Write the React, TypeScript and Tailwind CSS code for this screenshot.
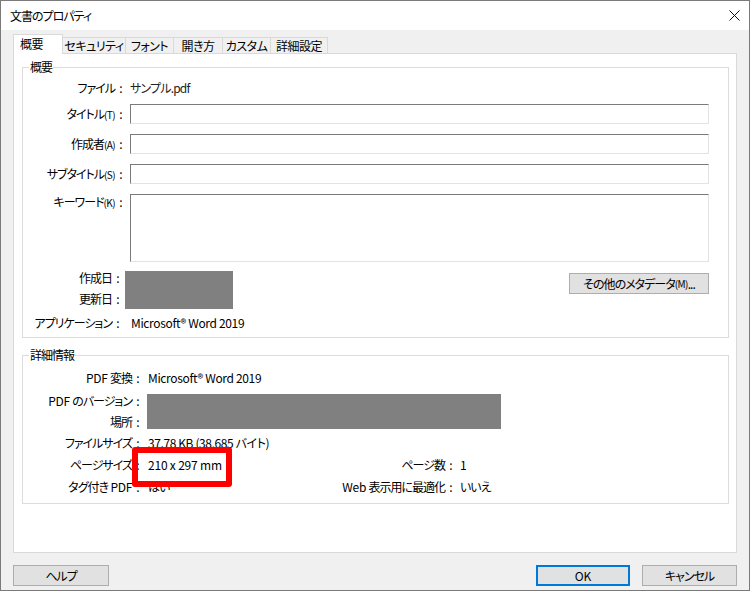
import React from 'react';

const tabs = [
  { label: '概要', w: 'w-[50px]', active: true },
  { label: 'セキュリティ', w: 'w-[63px]' },
  { label: 'フォント', w: 'w-[48px]' },
  { label: '開き方', w: 'w-[49px]' },
  { label: 'カスタム', w: 'w-[48px]' },
  { label: '詳細設定', w: 'w-[57px]' },
];

function Label({ children, className = '' }: { children: React.ReactNode; className?: string }) {
  return (
    <div className={`flex justify-end items-center shrink-0 whitespace-nowrap ${className}`}>
      <span>{children}</span>
      <span className="w-[12px] text-center tracking-normal">:</span>
    </div>
  );
}

function Field({ className = '' }: { className?: string }) {
  return (
    <div
      className={`flex-1 bg-white border border-[#e3e3e3] border-t-[#7a7a7a] border-l-[#7a7a7a] ${className}`}
    />
  );
}

function Key({ k }: { k: string }) {
  return <span className="text-[10px] tracking-[-0.6px]">({k})</span>;
}

export default function App() {
  return (
    <div
      lang="ja"
      className="relative w-[750px] h-[591px] flex flex-col bg-[#f0f0f0] border border-[#7a7a7a] text-[12px] leading-none tracking-[-1px] text-black font-['Noto_Sans_CJK_JP',sans-serif] [font-feature-settings:'palt']"
    >
      {/* Title bar */}
      <div className="h-[29px] shrink-0 bg-white flex items-center justify-between pl-[9px] pr-[9px]">
        <span>文書のプロパティ</span>
        <svg width="11" height="11" viewBox="0 0 11 11">
          <path d="M0.5 0.5L10.5 10.5M10.5 0.5L0.5 10.5" stroke="#111" strokeWidth="1" />
        </svg>
      </div>

      <div className="flex flex-col px-[12px] pt-[4px]">
        {/* Tabs */}
        <div className="flex items-end h-[19px] tracking-[-0.5px]">
          {tabs.map((t) =>
            t.active ? (
              <div
                key={t.label}
                className={`${t.w} relative z-10 h-[20px] -mb-px bg-white border border-b-0 border-[#d9d9d9] flex items-center pl-[6px] pb-[2px] whitespace-nowrap`}
              >
                {t.label}
              </div>
            ) : (
              <div
                key={t.label}
                className={`${t.w} h-[16px] bg-[#f0f0f0] border-t border-r border-[#d9d9d9] flex items-center justify-center whitespace-nowrap`}
              >
                {t.label}
              </div>
            )
          )}
        </div>

        {/* Panel */}
        <div className="h-[500px] bg-white border border-[#d9d9d9] pl-[8px] pr-[7px] pt-[5px] flex flex-col">
          {/* 概要 group */}
          <fieldset className="h-[279px] border border-[#dcdcdc] pr-[19px] flex flex-col">
            <legend className="ml-[6px] px-[1px] leading-[16px]">概要</legend>

            <div className="mt-[3px] h-[20px] flex items-center">
              <Label className="w-[104px]">ファイル</Label>
              <span className="ml-[3px] text-[#222] tracking-[-0.8px]">サンプル.pdf</span>
            </div>

            <div className="mt-[6px] h-[20px] flex">
              <Label className="w-[104px]">
                タイトル<Key k="T" />
              </Label>
              <Field className="ml-[3px]" />
            </div>

            <div className="mt-[10px] h-[20px] flex">
              <Label className="w-[104px]">
                作成者<Key k="A" />
              </Label>
              <Field className="ml-[3px]" />
            </div>

            <div className="mt-[10px] h-[20px] flex">
              <Label className="w-[104px]">
                サブタイトル<Key k="S" />
              </Label>
              <Field className="ml-[3px]" />
            </div>

            <div className="mt-[10px] h-[68px] flex items-start">
              <Label className="w-[104px] h-[16px]">
                キーワード<Key k="K" />
              </Label>
              <Field className="ml-[3px] h-[68px]" />
            </div>

            <div className="mt-[9px] flex items-start">
              <div className="w-[101px] flex flex-col gap-[7px]">
                <Label className="h-[14px]">作成日</Label>
                <Label className="h-[14px]">更新日</Label>
              </div>
              <div className="ml-[1px] w-[108px] h-[38px] bg-[#808080]" />
              <div className="flex-1" />
              <button className="mt-[2px] w-[140px] h-[21px] bg-[#e1e1e1] border border-[#adadad] flex items-center justify-center whitespace-nowrap">
                その他のメタデータ<Key k="M" />...
              </button>
            </div>

            <div className="mt-[4px] h-[20px] flex items-center">
              <Label className="w-[101px]">アプリケーション</Label>
              <span className="ml-[7px] tracking-[-0.35px]">Microsoft® Word 2019</span>
            </div>
          </fieldset>

          {/* 詳細情報 group */}
          <fieldset className="mt-[9px] h-[157px] border border-[#dcdcdc] flex flex-col">
            <legend className="ml-[6px] px-[1px] leading-[16px]">詳細情報</legend>

            <div className="mt-[5px] h-[20px] flex items-center">
              <Label className="w-[121px]">
                <span className="tracking-[-0.3px]">PDF </span>変換
              </Label>
              <span className="ml-[4px] tracking-[-0.35px]">Microsoft® Word 2019</span>
            </div>

            <div className="mt-[6px] flex items-start">
              <div className="w-[121px] flex flex-col gap-[7px]">
                <Label className="h-[14px]">
                  <span className="tracking-[-0.3px]">PDF </span>のバージョン
                </Label>
                <Label className="h-[14px]">場所</Label>
              </div>
              <div className="ml-[3px] w-[354px] h-[35px] bg-[#808080]" />
            </div>

            <div className="mt-[3px] flex flex-col">
              <div className="h-[22px] flex items-center">
                <Label className="w-[121px]">ファイルサイズ</Label>
                <span className="ml-[4px] tracking-[-0.4px]">37.78 KB (38,685 バイト)</span>
              </div>
              <div className="h-[22px] flex items-center">
                <div className="w-[278px] flex items-center">
                  <Label className="w-[121px]">ページサイズ</Label>
                  <span className="ml-[4px] tracking-[-0.2px]">210 x 297 mm</span>
                </div>
                <Label className="w-[156px]">ページ数</Label>
                <span className="ml-[3px]">1</span>
              </div>
              <div className="h-[22px] flex items-center">
                <div className="w-[278px] flex items-center">
                  <Label className="w-[121px]">
                    タグ付き<span className="tracking-[-0.3px]"> PDF</span>
                  </Label>
                  <span className="ml-[4px]">はい</span>
                </div>
                <Label className="w-[156px]">
                  <span className="tracking-[-0.3px]">Web </span>表示用に最適化
                </Label>
                <span className="ml-[3px]">いいえ</span>
              </div>
            </div>
          </fieldset>
        </div>

        {/* Bottom buttons */}
        <div className="mt-[12px] flex">
          <button className="w-[96px] h-[21px] bg-[#e1e1e1] border border-[#adadad] flex items-center justify-center">
            ヘルプ
          </button>
          <div className="flex-1" />
          <button className="w-[94px] h-[21px] bg-[#e1e1e1] border-2 border-[#0078d7] flex items-center justify-center tracking-normal">
            OK
          </button>
          <button className="ml-[12px] w-[95px] h-[21px] bg-[#e1e1e1] border border-[#adadad] flex items-center justify-center">
            キャンセル
          </button>
        </div>
      </div>

      {/* Red highlight annotation */}
      <div className="absolute left-[131px] top-[446px] w-[100px] h-[40px] border-[6px] border-[#ff0000] rounded-[3px]" />
    </div>
  );
}
